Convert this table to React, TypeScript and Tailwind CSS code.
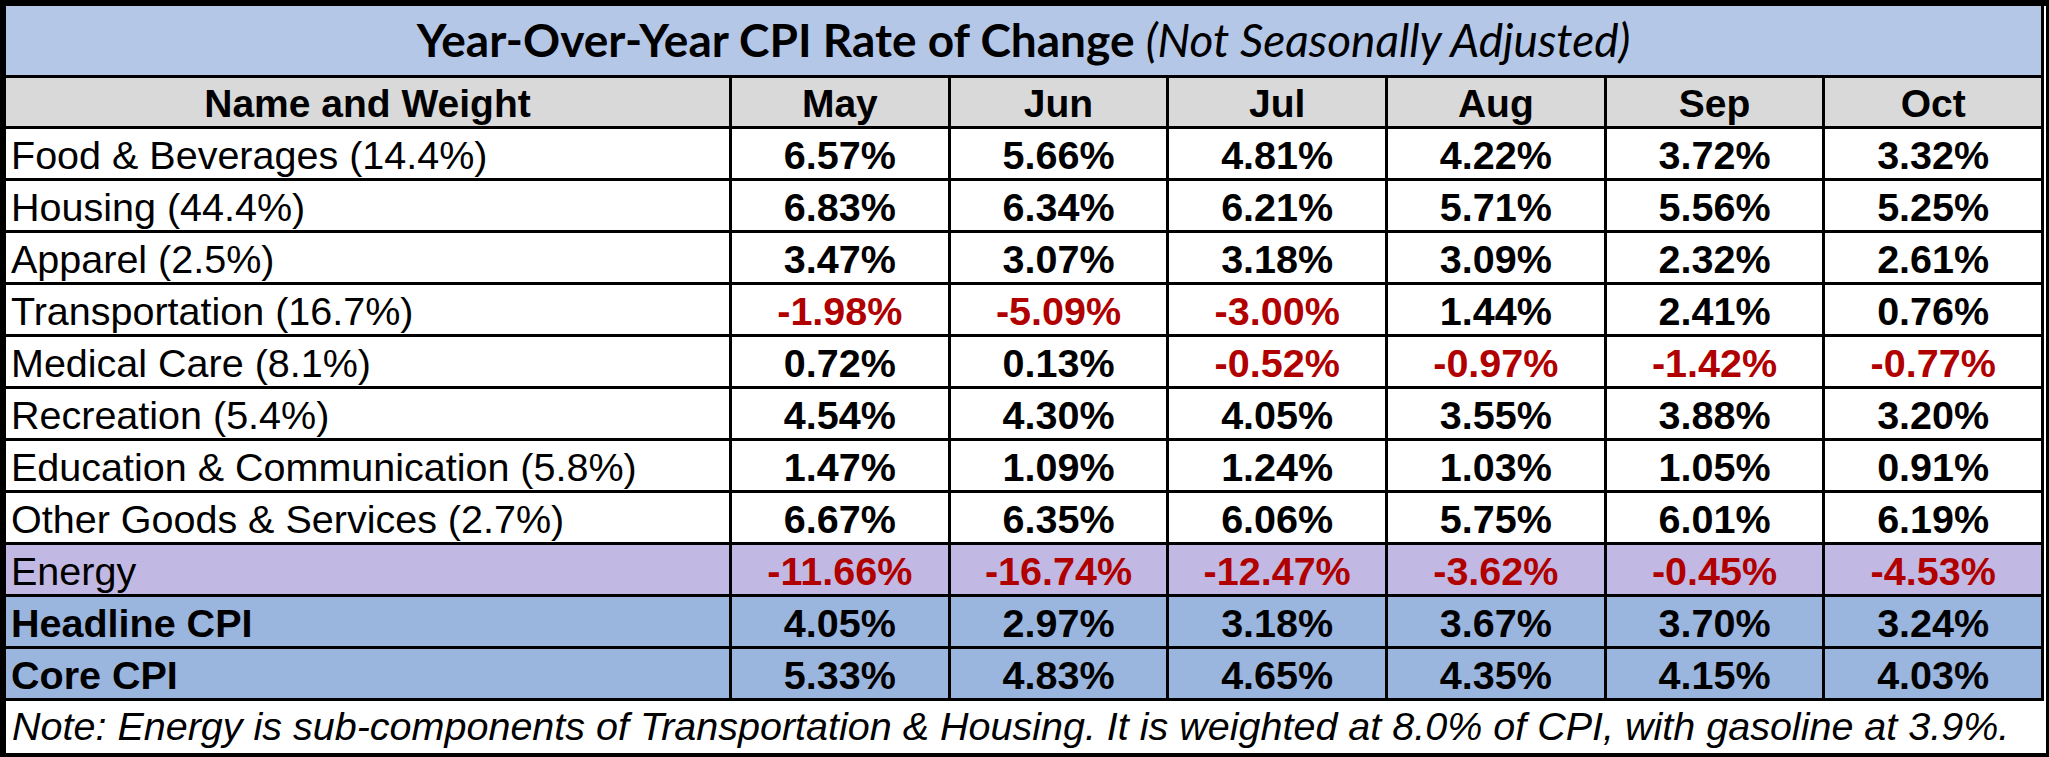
import React from 'react';

type Row = {
  label: string;
  values: number[];
  bg: string;
  boldLabel?: boolean;
};

const months = ['May', 'Jun', 'Jul', 'Aug', 'Sep', 'Oct'];

const rows: Row[] = [
  { label: 'Food & Beverages (14.4%)', values: [6.57, 5.66, 4.81, 4.22, 3.72, 3.32], bg: 'bg-white' },
  { label: 'Housing (44.4%)', values: [6.83, 6.34, 6.21, 5.71, 5.56, 5.25], bg: 'bg-white' },
  { label: 'Apparel (2.5%)', values: [3.47, 3.07, 3.18, 3.09, 2.32, 2.61], bg: 'bg-white' },
  { label: 'Transportation (16.7%)', values: [-1.98, -5.09, -3.0, 1.44, 2.41, 0.76], bg: 'bg-white' },
  { label: 'Medical Care (8.1%)', values: [0.72, 0.13, -0.52, -0.97, -1.42, -0.77], bg: 'bg-white' },
  { label: 'Recreation (5.4%)', values: [4.54, 4.3, 4.05, 3.55, 3.88, 3.2], bg: 'bg-white' },
  { label: 'Education & Communication (5.8%)', values: [1.47, 1.09, 1.24, 1.03, 1.05, 0.91], bg: 'bg-white' },
  { label: 'Other Goods & Services (2.7%)', values: [6.67, 6.35, 6.06, 5.75, 6.01, 6.19], bg: 'bg-white' },
  { label: 'Energy', values: [-11.66, -16.74, -12.47, -3.62, -0.45, -4.53], bg: 'bg-[#c1b8e3]' },
  { label: 'Headline CPI', values: [4.05, 2.97, 3.18, 3.67, 3.7, 3.24], bg: 'bg-[#9ab5de]', boldLabel: true },
  { label: 'Core CPI', values: [5.33, 4.83, 4.65, 4.35, 4.15, 4.03], bg: 'bg-[#9ab5de]', boldLabel: true },
];

export default function App() {
  return (
    <main className="w-[2049px] h-[757px] bg-white overflow-hidden">
      <div className="h-full flex flex-col border-black border-l-[6px] border-t-[6px] border-r-[3px] border-b-[4px] font-['Liberation_Sans',Arial,sans-serif] text-black">
        {/* Title + table */}
        <div className="mr-[2px] border-r-[3px] border-black">
          <div className="h-[72px] pb-[2px] flex items-center justify-center bg-[#b4c7e7] border-b-[3px] border-black font-['Lato',sans-serif] text-[46px] leading-none">
            <span className="font-bold">Year-Over-Year CPI Rate of Change&nbsp;</span>
            <span className="italic">(Not Seasonally Adjusted)</span>
          </div>

          <div className="grid grid-cols-[723px_repeat(6,minmax(0,1fr))] gap-[3px] bg-black border-b-[3px] border-black">
            {/* Header row */}
            <div className="h-[48px] pt-[3px] flex items-center justify-center bg-[#d9d9d9] text-[39px] font-bold leading-none">
              Name and Weight
            </div>
            {months.map((m) => (
              <div key={m} className="h-[48px] pt-[3px] flex items-center justify-center bg-[#d9d9d9] text-[39px] font-bold leading-none">
                {m}
              </div>
            ))}

            {rows.map((r) => (
              <React.Fragment key={r.label}>
                <div className={`h-[49px] pt-[4px] pl-[5px] flex items-center text-[39.5px] leading-none whitespace-nowrap ${r.bg} ${r.boldLabel ? 'font-bold' : ''}`}>
                  {r.label}
                </div>
                {r.values.map((v, i) => (
                  <div
                    key={i}
                    className={`h-[49px] pt-[4px] flex items-center justify-center text-[39.5px] leading-none font-bold ${r.bg} ${v < 0 ? 'text-[#b00000]' : 'text-black'}`}
                  >
                    {v.toFixed(2)}%
                  </div>
                ))}
              </React.Fragment>
            ))}
          </div>
        </div>

        {/* Note */}
        <div className="flex-1 flex items-center pl-[6px] italic text-[39.5px] leading-none whitespace-nowrap">
          Note: Energy is sub-components of Transportation &amp; Housing. It is weighted at 8.0% of CPI, with gasoline at 3.9%.
        </div>
      </div>
    </main>
  );
}
